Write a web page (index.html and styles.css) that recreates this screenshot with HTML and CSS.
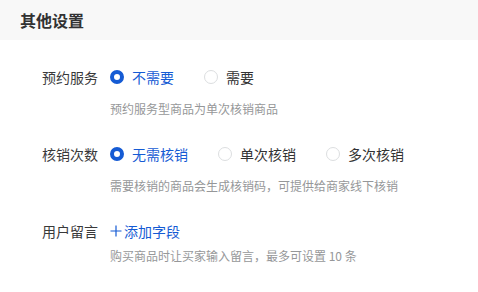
FILE: index.html
```html
<!DOCTYPE html>
<html lang="zh-CN">
<head>
  <meta charset="UTF-8">
  <meta name="viewport" content="width=device-width, initial-scale=1.0">
  <title>其他设置</title>
  <link rel="stylesheet" href="styles.css">
</head>
<body>
  <!-- 标题栏 -->
  <div class="block-title">其他设置</div>

  <div class="form">
    <div class="form-item">
      <div class="form-label">预约服务</div>
      <div class="form-controls">
        <div class="radio-group">
          <label class="radio checked"><span class="radio-icon"></span>不需要</label>
          <label class="radio"><span class="radio-icon"></span>需要</label>
        </div>
        <div class="help">预约服务型商品为单次核销商品</div>
      </div>
    </div>

    <div class="form-item">
      <div class="form-label">核销次数</div>
      <div class="form-controls">
        <div class="radio-group">
          <label class="radio checked"><span class="radio-icon"></span>无需核销</label>
          <label class="radio"><span class="radio-icon"></span>单次核销</label>
          <label class="radio"><span class="radio-icon"></span>多次核销</label>
        </div>
        <div class="help">需要核销的商品会生成核销码，可提供给商家线下核销</div>
      </div>
    </div>

    <div class="form-item">
      <div class="form-label">用户留言</div>
      <div class="form-controls">
        <a class="add-link" href="#">
          <svg width="12" height="12" viewBox="0 0 12 12"><path d="M6 0.5V11.5M0.5 6H11.5" stroke="#155bd4" stroke-width="1.2" fill="none"/></svg>添加字段
        </a>
        <div class="help help-tight">购买商品时让买家输入留言，最多可设置 10 条</div>
      </div>
    </div>
  </div>
</body>
</html>
```

FILE: styles.css
```css
body {
  margin: 0;
  font-family: "Noto Sans CJK SC", "Liberation Sans", sans-serif;
  color: #323233;
  background: #fff;
}

/* 标题栏 */
.block-title {
  height: 40px;
  line-height: 40px;
  padding-left: 20px;
  background-color: #f8f8f8;
  font-size: 16px;
  font-weight: bold;
  color: #323233;
}

.form {
  padding-top: 27px;
}

.form-item {
  display: flex;
  margin-bottom: 26px;
}

.form-label {
  width: 98px;
  margin-right: 12px;
  text-align: right;
  font-size: 14px;
  line-height: 20px;
  color: #39393a;
  flex-shrink: 0;
}

.form-controls {
  display: flex;
  flex-direction: column;
}

.radio-group {
  display: flex;
  height: 20px;
}

.radio {
  display: flex;
  align-items: center;
  margin-right: 30px;
  font-size: 14px;
  line-height: 20px;
  color: #323233;
}

.radio-icon {
  width: 14px;
  height: 14px;
  box-sizing: border-box;
  border: 1px solid #dcdee0;
  border-radius: 50%;
  margin-right: 8px;
  background: #fff;
}

.radio.checked {
  color: #155bd4;
}

.radio.checked .radio-icon {
  border: 4.5px solid #155bd4;
}

.add-link {
  display: flex;
  align-items: center;
  height: 20px;
  font-size: 14px;
  color: #155bd4;
  text-decoration: none;
}

.add-link svg {
  margin-right: 2px;
}

.help {
  margin-top: 13px;
  font-size: 12px;
  line-height: 18px;
  color: #969799;
}

.help-tight {
  margin-top: 6px;
}
```
